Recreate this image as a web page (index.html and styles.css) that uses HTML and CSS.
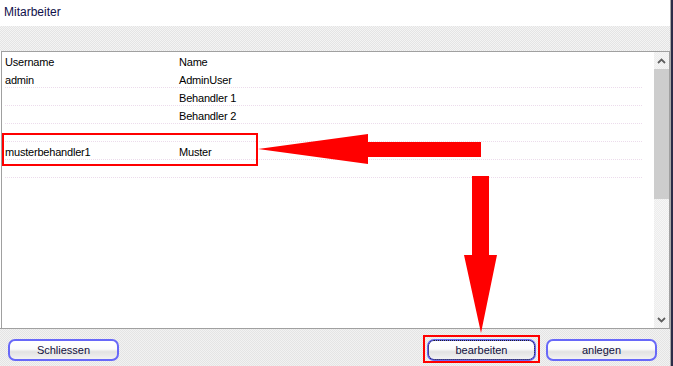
FILE: index.html
```html
<!DOCTYPE html>
<html lang="de">
<head>
  <meta charset="UTF-8">
  <title>Mitarbeiter</title>
  <link rel="stylesheet" href="styles.css">
</head>
<body>
  <div id="window">
    <div class="title">Mitarbeiter</div>
    <div class="toolbar"></div>

    <div class="panel">
      <div class="list">
        <div class="row head"><span>Username</span><span>Name</span></div>
        <div class="row"><span>admin</span><span>AdminUser</span></div>
        <div class="row"><span></span><span>Behandler 1</span></div>
        <div class="row"><span></span><span>Behandler 2</span></div>
        <div class="row"><span></span><span></span></div>
        <div class="row"><span>musterbehandler1</span><span>Muster</span></div>
        <div class="row"><span></span><span></span></div>
      </div>
      <div class="scrollbar">
        <div class="sb-btn">
          <svg width="9" height="6" viewBox="0 0 9 6"><path d="M1 5 L4.5 1.5 L8 5" fill="none" stroke="#606060" stroke-width="1.8"/></svg>
        </div>
        <div class="sb-thumb"></div>
        <div class="sb-track"></div>
        <div class="sb-btn">
          <svg width="9" height="6" viewBox="0 0 9 6"><path d="M1 1 L4.5 4.5 L8 1" fill="none" stroke="#606060" stroke-width="1.8"/></svg>
        </div>
      </div>
    </div>

    <div class="footer">
      <button class="btn">Schliessen</button>
      <div class="spacer"></div>
      <button class="btn focused">bearbeiten</button>
      <button class="btn">anlegen</button>
    </div>

    <!-- annotations drawn over the dialog -->
    <svg class="marks" width="673" height="366" viewBox="0 0 673 366">
      <rect x="3" y="134" width="254" height="31" fill="none" stroke="#ff0000" stroke-width="2"/>
      <rect x="424" y="336" width="115" height="26" fill="none" stroke="#ff0000" stroke-width="2"/>
      <polygon points="258,149 368,134 368,142 481,142 481,157 368,157 368,164" fill="#ff0000"/>
      <polygon points="472,176 489,176 489,255 497,255 481,333 464,255 472,255" fill="#ff0000"/>
    </svg>
  </div>
</body>
</html>
```

FILE: styles.css
```css
body {
  margin: 0;
  background-color: #2c2c48;
  font-family: "Liberation Sans", Arial, sans-serif;
  color: #000000;
}

#window {
  position: relative;
  width: 670px;
  height: 366px;
  display: flex;
  flex-direction: column;
  background-color: #ffffff;
  border-right: 1px solid #a8a8a8;
}

.title {
  height: 26px;
  box-sizing: border-box;
  padding: 5px 0 0 4px;
  font-size: 12px;
  color: #10104a;
  background-color: #ffffff;
}

.toolbar {
  height: 25px;
  background: repeating-conic-gradient(#e4e4e4 0 25%, #f4f4f4 0 50%) 0 0 / 2px 2px;
}

.panel {
  height: 277px;
  box-sizing: border-box;
  margin-left: 1px;
  border: 1px solid #a0a0a0;
  border-bottom: none;
  display: flex;
  background-color: #ffffff;
}

.list {
  flex: 1;
  padding: 0 12px 0 3px;
  font-size: 11px;
  letter-spacing: -0.2px;
}

.row {
  display: grid;
  grid-template-columns: 174px 1fr;
  height: 18px;
  box-sizing: border-box;
  padding-top: 2px;
  align-items: center;
  border-bottom: 1px dotted #ecdcec;
}

.row.head {
  border-bottom: none;
}

.scrollbar {
  width: 15px;
  display: flex;
  flex-direction: column;
  background: repeating-conic-gradient(#ececec 0 25%, #f6f6f6 0 50%) 0 0 / 2px 2px;
}

.sb-btn {
  height: 17px;
  display: flex;
  align-items: center;
  justify-content: center;
}

.sb-thumb {
  height: 130px;
  background-color: #cdcdcd;
}

.sb-track {
  flex: 1;
}

.footer {
  flex: 1;
  display: flex;
  align-items: flex-start;
  gap: 10px;
  padding: 10px 13px 0 8px;
  border-top: 1px solid #a0a0a0;
  background: repeating-conic-gradient(#e4e4e4 0 25%, #f2f2f2 0 50%) 0 0 / 2px 2px;
}

.spacer {
  flex: 1;
}

.btn {
  width: 111px;
  height: 22px;
  border: 2px solid #6868f8;
  border-radius: 7px;
  background: linear-gradient(#ffffff, #fbfbfb 45%, #e2e2e2 60%, #f2f2f2);
  font-family: "Liberation Sans", Arial, sans-serif;
  font-size: 11px;
  color: #101040;
  padding: 0;
}

.btn.focused {
  width: 109px;
  outline: 1px dotted #202020;
  outline-offset: -2px;
}

.marks {
  position: absolute;
  left: 0;
  top: 0;
  pointer-events: none;
}
```
